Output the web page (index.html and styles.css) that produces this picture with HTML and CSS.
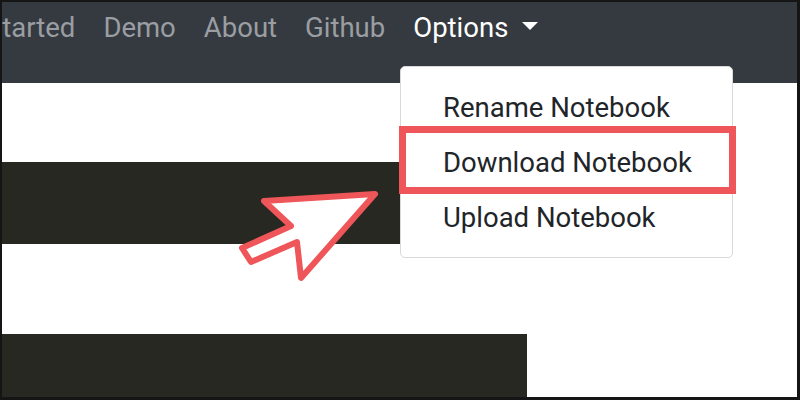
FILE: index.html
```html
<!DOCTYPE HTML>
<html>

<head>
    <title>Notebook options</title>
    <meta name="viewport" content="width=device-width, initial-scale=1">
    <link rel="stylesheet" href="styles.css">
</head>

<body>
    <div class="frame">
        <nav class="navbar">
            <a class="nav-link" href="#">Started</a>
            <a class="nav-link" href="#">Demo</a>
            <a class="nav-link" href="#">About</a>
            <a class="nav-link" href="#">Github</a>
            <a class="nav-link active dropdown-toggle" href="#">Options</a>
        </nav>

        <div class="content">
            <div class="code-block first"></div>
            <div class="code-block second"></div>
        </div>

        <!-- open menu sits over the page -->
        <div class="dropdown-menu">
            <a class="dropdown-item" href="#">Rename Notebook</a>
            <a class="dropdown-item marked" href="#">Download Notebook</a>
            <a class="dropdown-item" href="#">Upload Notebook</a>
        </div>

        <svg class="pointer" width="160" height="110" viewBox="0 0 160 110">
            <polygon points="145,14 34,21 61,46 12,68 21,82 67,62 71,98"
                fill="#ffffff" stroke="#ef5659" stroke-width="6" stroke-linejoin="round" />
        </svg>
    </div>
</body>

</html>
```

FILE: styles.css
```css
html {
    font-family: Roboto, "Liberation Sans", Arial, sans-serif;
}

body {
    margin: 0px;
    background: #ffffff;
}

.frame {
    position: relative;
    width: 800px;
    height: 400px;
    box-sizing: border-box;
    border: 2px solid #151515;
    border-right-width: 3px;
    border-bottom-width: 3px;
    overflow: hidden;
    background: #ffffff;
}

.navbar {
    display: flex;
    height: 81px;
    box-sizing: border-box;
    padding-top: 6px;
    margin-left: -30px;
    background-color: #343a40;
}

.nav-link {
    display: block;
    padding: 0px 14px;
    font-size: 27.5px;
    line-height: 40px;
    color: #9a9ea3;
    text-decoration: none;
    white-space: nowrap;
}

.nav-link.active {
    color: #ffffff;
}

.dropdown-toggle::after {
    content: "";
    display: inline-block;
    margin-left: 14px;
    vertical-align: 7px;
    border-top: 8px solid #ffffff;
    border-left: 8px solid transparent;
    border-right: 8px solid transparent;
}

.content {
    padding-top: 79px;
}

.code-block {
    background-color: #272822;
}

.code-block.first {
    width: 600px;
    height: 82px;
}

.code-block.second {
    width: 525px;
    height: 80px;
    margin-top: 90px;
}

.dropdown-menu {
    position: absolute;
    left: 398px;
    top: 64px;
    width: 333px;
    box-sizing: border-box;
    padding: 13px 0px 12px 0px;
    background: #ffffff;
    border: 1px solid #d9d9d9;
    border-radius: 5px;
}

.dropdown-item {
    position: relative;
    display: block;
    padding-left: 42px;
    font-size: 27.5px;
    line-height: 55px;
    color: #212529;
    text-decoration: none;
    white-space: nowrap;
}

.dropdown-item.marked::after {
    content: "";
    position: absolute;
    left: -2px;
    right: -4px;
    top: -9px;
    bottom: -4px;
    border: 7px solid #ef5659;
}

.pointer {
    position: absolute;
    left: 228px;
    top: 178px;
}
```
